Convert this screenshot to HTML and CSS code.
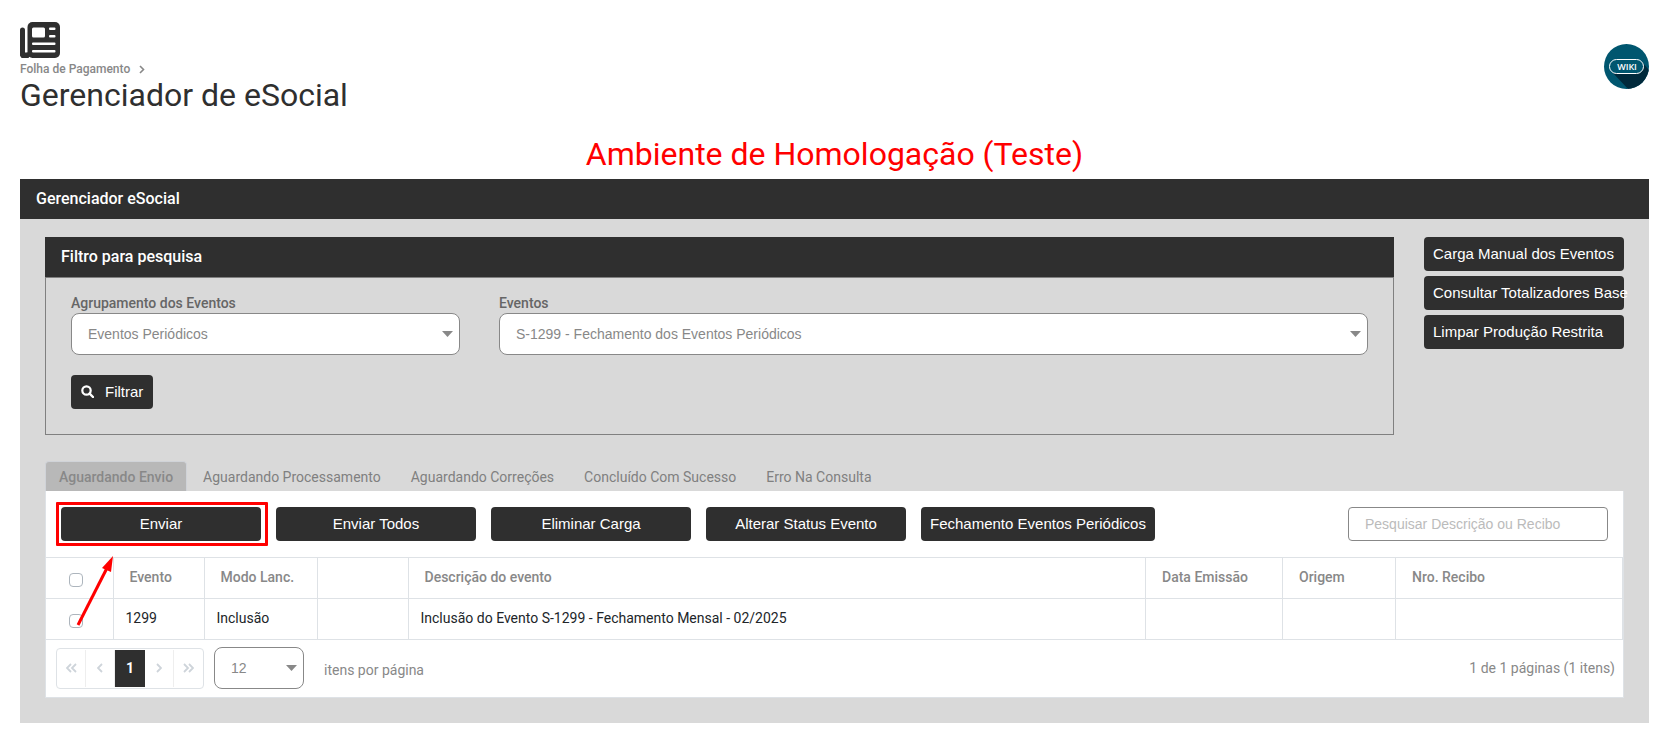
FILE: index.html
```html
<!DOCTYPE html>
<html lang="pt-BR">
<head>
    <meta charset="UTF-8">
    <title>Gerenciador de eSocial</title>
    <meta name="viewport" content="width=device-width, initial-scale=1.0">
    <link rel="stylesheet" href="styles.css">
</head>
<body>
    <header class="page-header">
        <div class="page-heading">
            <svg class="page-icon" viewBox="0 0 40 36" aria-hidden="true">
                <path d="M2.5 8v23a2.5 2.5 0 0 0 5 2" fill="none" stroke="currentColor" stroke-width="5" stroke-linecap="round"/>
                <path d="M6.4 7v23.5" stroke="#fff" stroke-width="2"/>
                <path d="M5 30.5v3" stroke="currentColor" stroke-width="6"/>
                <rect x="7.5" y="0" width="32.5" height="36" rx="5" fill="currentColor"/>
                <path d="M6 5v25" stroke="#fff" stroke-width="2"/>
                <g fill="#fff">
                    <rect x="12" y="5.5" width="13" height="10" rx="1.5"/>
                    <rect x="29" y="5.5" width="6.5" height="2.5" rx="1"/>
                    <rect x="29" y="13" width="6.5" height="2.5" rx="1"/>
                    <rect x="12" y="20.5" width="23.5" height="2.5" rx="1"/>
                    <rect x="12" y="28" width="23.5" height="2.5" rx="1"/>
                </g>
            </svg>
            <nav class="breadcrumb">
                <a href="#">Folha de Pagamento</a>
                <svg width="6" height="9" viewBox="0 0 6 9" aria-hidden="true"><path d="M1 1l3.5 3.5L1 8" fill="none" stroke="currentColor" stroke-width="1.6"/></svg>
            </nav>
            <h1>Gerenciador de eSocial</h1>
        </div>
        <a class="wiki" href="#" title="Wiki">
            <svg width="45" height="45" viewBox="0 0 45 45">
                <defs><clipPath id="wiki-circle"><circle cx="22.5" cy="22.5" r="22.5"/></clipPath></defs>
                <circle cx="22.5" cy="22.5" r="22.5" fill="#00566f"/>
                <path clip-path="url(#wiki-circle)" d="M8 28L25 46H46V27L38 18L36 29Z" fill="#00293b"/>
                <rect x="5.5" y="15.5" width="34" height="14" rx="7" fill="#00566f" stroke="#fff" stroke-width="1"/>
                <text x="23" y="26" class="wiki-text">WIKI</text>
            </svg>
        </a>
    </header>

    <main>
        <h2 class="environment">Ambiente de Homologação (Teste)</h2>

        <section class="manager">
            <h3 class="bar">Gerenciador eSocial</h3>
            <div class="manager-body">
                <div class="top">
                    <form class="filter">
                        <h3 class="bar">Filtro para pesquisa</h3>
                        <div class="filter-body">
                            <div class="fields">
                                <div class="field field-group">
                                    <label for="agrupamento">Agrupamento dos Eventos</label>
                                    <select id="agrupamento">
                                        <option>Eventos Periódicos</option>
                                    </select>
                                </div>
                                <div class="field field-event">
                                    <label for="eventos">Eventos</label>
                                    <select id="eventos">
                                        <option>S-1299 - Fechamento dos Eventos Periódicos</option>
                                    </select>
                                </div>
                            </div>
                            <button type="button" class="btn btn-filter">
                                <svg width="13" height="13" viewBox="0 0 13 13" aria-hidden="true"><circle cx="5.5" cy="5.5" r="4.2" fill="none" stroke="currentColor" stroke-width="2.2"/><path d="M8.6 8.6L12 12" stroke="currentColor" stroke-width="2.4" stroke-linecap="round"/></svg>
                                Filtrar
                            </button>
                        </div>
                    </form>
                    <div class="side">
                        <button type="button" class="btn">Carga Manual dos Eventos</button>
                        <button type="button" class="btn">Consultar Totalizadores Base</button>
                        <button type="button" class="btn">Limpar Produção Restrita</button>
                    </div>
                </div>

                <div class="tabs" role="tablist">
                    <button type="button" class="tab active" role="tab" aria-selected="true">Aguardando Envio</button>
                    <button type="button" class="tab" role="tab">Aguardando Processamento</button>
                    <button type="button" class="tab" role="tab">Aguardando Correções</button>
                    <button type="button" class="tab" role="tab">Concluído Com Sucesso</button>
                    <button type="button" class="tab" role="tab">Erro Na Consulta</button>
                </div>

                <div class="panel">
                    <div class="toolbar">
                        <div class="highlight">
                            <button type="button" class="btn">Enviar</button>
                            <svg class="arrow" width="42" height="76" viewBox="0 0 42 76" aria-hidden="true">
                                <path d="M4 72L33 15" fill="none" stroke="#f00" stroke-width="3"/>
                                <path d="M39 3L28 15L37 19Z" fill="#f00"/>
                            </svg>
                        </div>
                        <button type="button" class="btn">Enviar Todos</button>
                        <button type="button" class="btn">Eliminar Carga</button>
                        <button type="button" class="btn">Alterar Status Evento</button>
                        <button type="button" class="btn">Fechamento Eventos Periódicos</button>
                        <input type="text" class="search" placeholder="Pesquisar Descrição ou Recibo" aria-label="Pesquisar Descrição ou Recibo">
                    </div>

                    <table class="events">
                        <colgroup>
                            <col class="col-check">
                            <col class="col-event">
                            <col class="col-mode">
                            <col class="col-event">
                            <col>
                            <col class="col-date">
                            <col class="col-mode">
                            <col class="col-receipt">
                        </colgroup>
                        <thead>
                            <tr>
                                <th class="check"><input type="checkbox" aria-label="Selecionar todos"></th>
                                <th>Evento</th>
                                <th>Modo Lanc.</th>
                                <th></th>
                                <th>Descrição do evento</th>
                                <th>Data Emissão</th>
                                <th>Origem</th>
                                <th>Nro. Recibo</th>
                            </tr>
                        </thead>
                        <tbody>
                            <tr>
                                <td class="check"><input type="checkbox" aria-label="Selecionar evento 1299"></td>
                                <td>1299</td>
                                <td>Inclusão</td>
                                <td></td>
                                <td>Inclusão do Evento S-1299 - Fechamento Mensal - 02/2025</td>
                                <td></td>
                                <td></td>
                                <td></td>
                            </tr>
                        </tbody>
                    </table>

                    <div class="pager">
                        <div class="pages">
                            <button type="button" aria-label="Primeira página"><svg width="11" height="10" viewBox="0 0 11 10"><path d="M5 1L1 5l4 4M10 1L6 5l4 4"/></svg></button>
                            <button type="button" aria-label="Página anterior"><svg width="6" height="10" viewBox="0 0 6 10"><path d="M5 1L1 5l4 4"/></svg></button>
                            <button type="button" class="current">1</button>
                            <button type="button" aria-label="Próxima página"><svg width="6" height="10" viewBox="0 0 6 10"><path d="M1 1l4 4-4 4"/></svg></button>
                            <button type="button" aria-label="Última página"><svg width="11" height="10" viewBox="0 0 11 10"><path d="M1 1l4 4-4 4M6 1l4 4-4 4"/></svg></button>
                        </div>
                        <select id="page-size">
                            <option>12</option>
                        </select>
                        <label for="page-size">itens por página</label>
                        <span class="page-info">1 de 1 páginas (1 itens)</span>
                    </div>
                </div>
            </div>
        </section>
    </main>
</body>
</html>
```

FILE: styles.css
```css
:root {
    --dark: #2f2f2f;
    --gray: #888;
    --bg: #d9d9d9;
    --line: #dee2e6;
}
* {
    box-sizing: border-box;
}
body {
    margin: 0;
    padding: 22px 15px 16px 20px;
    background: #fff;
    color: #212529;
    font-family: Roboto, "Liberation Sans", sans-serif;
    font-size: 14px;
    line-height: 20px;
}
h1, h2, h3 {
    margin: 0;
}

/* Header */
.page-header {
    display: flex;
    justify-content: space-between;
    align-items: center;
}
.page-icon {
    display: block;
    width: 40px;
    height: 36px;
    color: var(--dark);
}
.breadcrumb {
    display: flex;
    align-items: center;
    gap: 9px;
    padding-top: 1px;
    color: var(--gray);
    font-size: 12px;
    font-weight: 500;
}
.breadcrumb a {
    color: inherit;
    text-decoration: none;
}
h1 {
    color: var(--dark);
    font-size: 32px;
    font-weight: 400;
    line-height: 32px;
}
.wiki svg {
    display: block;
}
.wiki-text {
    fill: #fff;
    font-family: "Open Sans", sans-serif;
    font-size: 9px;
    font-weight: 600;
    letter-spacing: 0;
    text-anchor: middle;
}
.environment {
    margin: 24px 0 6px;
    color: #f00;
    font-size: 32px;
    font-weight: 400;
    line-height: 38px;
    text-align: center;
}

/* Panels */
.bar {
    padding: 0 16px;
    background: var(--dark);
    color: #fff;
    font-size: 16px;
    font-weight: 500;
    line-height: 40px;
}
.manager {
    background: var(--bg);
}
.manager-body {
    padding: 18px 25px 25px;
}
.top {
    display: flex;
    align-items: flex-start;
    gap: 30px;
    margin-bottom: 26px;
}
.filter {
    flex: 1;
}
.filter-body {
    padding: 15px 25px 25px;
    border: 1px solid #808080;
}
.fields {
    display: flex;
    justify-content: space-between;
    margin-bottom: 20px;
}
.field label {
    display: block;
    color: #666;
    font-weight: 500;
}
.field select {
    width: 100%;
}
.field-group {
    width: 30%;
}
.field-event {
    width: 67%;
}
select {
    height: 42px;
    padding: 0 16px;
    appearance: none;
    border: 1px solid var(--gray);
    border-radius: 8px;
    background: #fff url("data:image/svg+xml,%3Csvg xmlns='http://www.w3.org/2000/svg' width='11' height='6'%3E%3Cpath d='M0 0h11L5.500 6z' fill='%23888'/%3E%3C/svg%3E") no-repeat right 6px center;
    color: var(--gray);
    font-family: "Liberation Sans", Arial, sans-serif;
    font-size: 14px;
}

/* Buttons */
.btn {
    min-width: 200px;
    height: 34px;
    padding: 0 9px 2px;
    border: none;
    border-radius: 4px;
    background: var(--dark);
    color: #fff;
    font-family: "Liberation Sans", Arial, sans-serif;
    font-size: 15px;
    white-space: nowrap;
    cursor: pointer;
}
.btn-filter {
    display: flex;
    align-items: center;
    gap: 11px;
    min-width: 0;
    padding: 0 10px 1px;
}
.side {
    display: flex;
    flex-direction: column;
    gap: 5px;
    width: 200px;
}
.side .btn {
    width: 100%;
    text-align: left;
}

/* Tabs */
.tabs {
    display: flex;
    gap: 2px;
}
.tab {
    height: 30px;
    padding: 0 13px;
    border: 1px solid transparent;
    border-bottom: none;
    border-radius: 4px 4px 0 0;
    background: none;
    color: #808080;
    font-family: inherit;
    font-size: 14px;
    cursor: pointer;
}
.tab.active {
    border-color: #d0d3d8;
    background: #b8b8b8;
    color: var(--gray);
    font-weight: 500;
}

/* Events list */
.panel {
    border: 1px solid var(--line);
    border-top: none;
    background: #fff;
}
.toolbar {
    display: flex;
    align-items: center;
    gap: 15px;
    padding: 16px 15px;
}
/* ring around the button, with an arrow coming from the row */
.highlight {
    position: relative;
}
.highlight::after {
    content: "";
    position: absolute;
    inset: -5px -7px -5px -5px;
    border: 3px solid #f00;
    border-radius: 1px;
    pointer-events: none;
}
.arrow {
    position: absolute;
    top: 46px;
    left: 13px;
}
.search {
    width: 260px;
    height: 34px;
    margin-left: auto;
    padding: 0 16px;
    border: 1px solid var(--gray);
    border-radius: 4px;
    font-family: "Liberation Sans", Arial, sans-serif;
    font-size: 14px;
}
.search::placeholder {
    color: #bbb;
}
.events {
    width: 100%;
    table-layout: fixed;
    border-collapse: collapse;
}
.col-check {
    width: 67px;
}
.col-event {
    width: 91px;
}
.col-mode {
    width: 113px;
}
.col-date {
    width: 137px;
}
.col-receipt {
    width: 227px;
}
.events th, .events td {
    height: 41px;
    padding: 0 12px 2px;
    border: 1px solid var(--line);
    text-align: left;
}
.events tr > :first-child {
    border-left: none;
}
.events th {
    padding: 0 16px 2px;
    color: var(--gray);
    font-weight: 500;
}
.events .check {
    padding: 3px 0 0 8px;
    line-height: 0;
    text-align: center;
}
.check input {
    width: 14px;
    height: 14px;
    margin: 0 14px 0 0;
    appearance: none;
    border: 1px solid #adb5bd;
    border-radius: 4px;
    background: #fff;
}

/* Pager */
.pager {
    display: flex;
    align-items: center;
    gap: 10px;
    padding: 7px 8px 8px 10px;
    color: var(--gray);
}
.pages {
    display: flex;
    padding: 1px 0;
    border: 1px solid var(--line);
    border-radius: 4px;
}
.pages button {
    width: 29px;
    height: 37px;
    padding: 0;
    border: none;
    border-right: 1px solid #eee;
    background: none;
}
.pages button:last-child {
    border-right: none;
}
.pages .current {
    width: 30px;
    border: none;
    background: var(--dark);
    color: #fff;
    font-family: inherit;
    font-size: 14px;
    font-weight: 700;
}
.pages path {
    fill: none;
    stroke: #ced4da;
    stroke-width: 1.8;
}
.pager select {
    width: 90px;
}
.pager label {
    padding: 4px 0 0 10px;
}
.page-info {
    margin-left: auto;
}
```
